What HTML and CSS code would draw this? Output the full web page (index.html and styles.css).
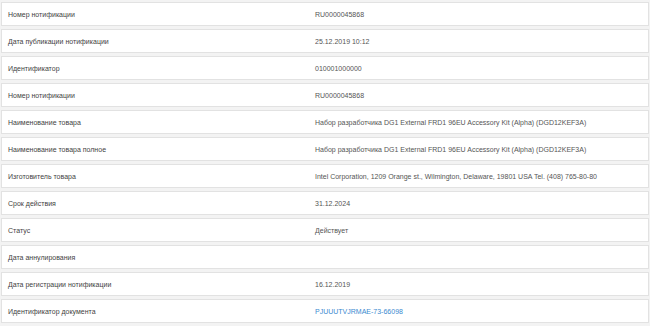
FILE: index.html
```html
<!DOCTYPE html>
<html lang="ru">
<head>
<meta charset="utf-8">
<link rel="stylesheet" href="styles.css">
</head>
<body>
<div class="list">
  <div class="row"><div class="label">Номер нотификации</div><div class="value">RU0000045868</div></div>
  <div class="row"><div class="label">Дата публикации нотификации</div><div class="value">25.12.2019 10:12</div></div>
  <div class="row"><div class="label">Идентификатор</div><div class="value">010001000000</div></div>
  <div class="row"><div class="label">Номер нотификации</div><div class="value">RU0000045868</div></div>
  <div class="row"><div class="label">Наименование товара</div><div class="value">Набор разработчика DG1 External FRD1 96EU Accessory Kit (Alpha) (DGD12KEF3A)</div></div>
  <div class="row"><div class="label">Наименование товара полное</div><div class="value">Набор разработчика DG1 External FRD1 96EU Accessory Kit (Alpha) (DGD12KEF3A)</div></div>
  <div class="row"><div class="label">Изготовитель товара</div><div class="value">Intel Corporation, 1209 Orange st., Wilmington, Delaware, 19801 USA Tel. (408) 765-80-80</div></div>
  <div class="row"><div class="label">Срок действия</div><div class="value">31.12.2024</div></div>
  <div class="row"><div class="label">Статус</div><div class="value">Действует</div></div>
  <div class="row"><div class="label">Дата аннулирования</div><div class="value"></div></div>
  <div class="row"><div class="label">Дата регистрации нотификации</div><div class="value">16.12.2019</div></div>
  <div class="row"><div class="label">Идентификатор документа</div><div class="value"><a class="link" href="#">PJUUUTVJRMAE-73-66098</a></div></div>
</div>
</body>
</html>
```
FILE: styles.css
```css
html, body {
  margin: 0;
  padding: 0;
  background: #f3f3f3;
}
body {
  font-family: "Liberation Sans", Arial, sans-serif;
  font-size: 7px;
  color: #555;
}
.list {
  display: flex;
  flex-direction: column;
  gap: 3px;
  padding: 2px 1px 3px 1px;
}
.row {
  display: grid;
  grid-template-columns: 306px 1fr;
  height: 24px;
  box-sizing: border-box;
  border: 1px solid #e2e2e2;
  background: #fff;
  align-items: center;
}
.label {
  padding-left: 6px;
  color: #3f3f3f;
}
.value {
  padding-left: 7px;
  color: #555;
}
.link {
  color: #3a8ad0;
  text-decoration: none;
}
```
